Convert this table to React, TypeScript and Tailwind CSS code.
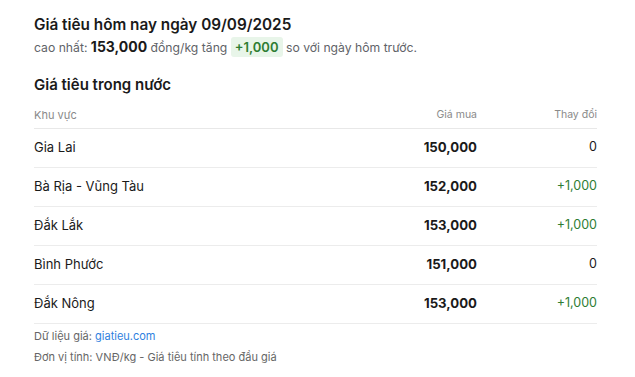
export default function App() {
  const rows = [
    { region: "Gia Lai", price: "150,000", change: "0" },
    { region: "Bà Rịa - Vũng Tàu", price: "152,000", change: "+1,000" },
    { region: "Đắk Lắk", price: "153,000", change: "+1,000" },
    { region: "Bình Phước", price: "151,000", change: "0" },
    { region: "Đắk Nông", price: "153,000", change: "+1,000" },
  ];

  return (
    <div className="min-h-screen bg-white font-['Inter',sans-serif] text-[#1a1a1a]">
      <div className="w-[563px] ml-[34px] pt-[14px]">
        <h1 className="text-[15.3px] font-semibold leading-[22px]">Giá tiêu hôm nay ngày 09/09/2025</h1>
        <p className="text-[12.2px] text-[#5f6368] leading-[22px]">
          cao nhất: <span className="text-[14px] font-bold text-[#1a1a1a]">153,000</span> đồng/kg tăng{" "}
          <span className="inline-block px-[4px] rounded-[3px] bg-[#e8f5e9] text-[13px] font-semibold text-[#2e7d32] leading-[20px]">+1,000</span>{" "}
          so với ngày hôm trước.
        </p>

        <h2 className="mt-[15px] text-[15px] font-semibold leading-[22px]">Giá tiêu trong nước</h2>

        <table className="w-full mt-[10px] border-collapse">
          <thead>
            <tr className="border-b border-[#e8e8e8] text-[11px] text-[#8a8a8a]">
              <th className="text-left font-normal h-[22px] pb-[3px]">Khu vực</th>
              <th className="text-right font-normal pb-[3px] text-[10.5px]">Giá mua</th>
              <th className="text-right font-normal pb-[3px] text-[10.5px] w-[120px]">Thay đổi</th>
            </tr>
          </thead>
          <tbody>
            {rows.map((r) => (
              <tr key={r.region} className="border-b border-[#ececec] h-[39px]">
                <td className="text-[13px]">{r.region}</td>
                <td className="text-right text-[13.2px] font-bold">{r.price}</td>
                <td className={`text-right text-[12.5px] ${r.change === "0" ? "text-[#1a1a1a]" : "text-[#2e7d32]"}`}>{r.change}</td>
              </tr>
            ))}
          </tbody>
        </table>

        <div className="mt-[2px] text-[11px] text-[#666] leading-[21px]">
          <p>
            Dữ liệu giá: <span className="text-[#2f7fe0]">giatieu.com</span>
          </p>
          <p>Đơn vị tính: VNĐ/kg - Giá tiêu tính theo đầu giá</p>
        </div>
      </div>
    </div>
  );
}
